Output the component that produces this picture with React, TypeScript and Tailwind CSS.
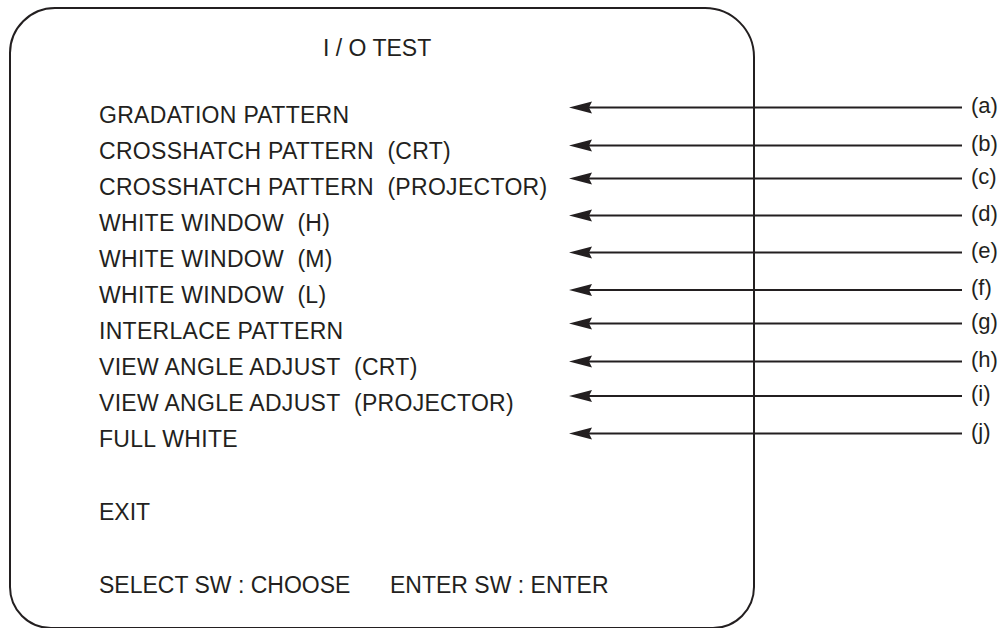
import React from "react";

const items = [
  "GRADATION PATTERN",
  "CROSSHATCH PATTERN\u00a0\u00a0(CRT)",
  "CROSSHATCH PATTERN\u00a0\u00a0(PROJECTOR)",
  "WHITE WINDOW\u00a0\u00a0(H)",
  "WHITE WINDOW\u00a0\u00a0(M)",
  "WHITE WINDOW\u00a0\u00a0(L)",
  "INTERLACE PATTERN",
  "VIEW ANGLE ADJUST\u00a0\u00a0(CRT)",
  "VIEW ANGLE ADJUST\u00a0\u00a0(PROJECTOR)",
  "FULL WHITE",
];

const callouts: { label: string; y: number }[] = [
  { label: "(a)", y: 107.5 },
  { label: "(b)", y: 145.5 },
  { label: "(c)", y: 178.5 },
  { label: "(d)", y: 215.5 },
  { label: "(e)", y: 252.5 },
  { label: "(f)", y: 290 },
  { label: "(g)", y: 323.5 },
  { label: "(h)", y: 361.5 },
  { label: "(i)", y: 396 },
  { label: "(j)", y: 433.5 },
];

export default function App() {
  return (
    <div
      className="relative w-[1001px] h-[628px] overflow-hidden bg-white text-[#231f20]"
      style={{ fontFamily: '"Liberation Sans", Arial, Helvetica, sans-serif' }}
    >
      <div className="ml-[9px] mt-[7px] w-[746px] h-[622px] border-2 border-[#231f20] rounded-tl-[46px] rounded-tr-[50px] rounded-bl-[42px] rounded-br-[42px] pl-[88px] pt-[21px] text-[23px] leading-[36px]">
        <div className="ml-[224px] mb-[31px]">I / O TEST</div>
        <div className="flex flex-col tracking-[0.3px]">
          {items.map((t) => (
            <div key={t} className="whitespace-nowrap">
              {t}
            </div>
          ))}
        </div>
        <div className="mt-[37px]">EXIT</div>
        <div className="mt-[37px] flex whitespace-nowrap">
          <span className="w-[291px]">SELECT SW : CHOOSE</span>
          <span>ENTER SW : ENTER</span>
        </div>
      </div>

      <svg
        className="absolute left-0 top-0 pointer-events-none"
        width="1001"
        height="628"
        viewBox="0 0 1001 628"
      >
        {callouts.map((c) => (
          <g key={c.label}>
            <line x1="588" y1={c.y} x2="962" y2={c.y} stroke="#231f20" strokeWidth="2.2" />
            <polygon
              points={`569,${c.y} 592,${c.y - 6} 589,${c.y} 592,${c.y + 6}`}
              fill="#231f20"
            />
          </g>
        ))}
      </svg>

      {callouts.map((c) => (
        <div
          key={c.label}
          className="absolute left-[971px] text-[22px] leading-[24px]"
          style={{ top: c.y - 14 }}
        >
          {c.label}
        </div>
      ))}
    </div>
  );
}
